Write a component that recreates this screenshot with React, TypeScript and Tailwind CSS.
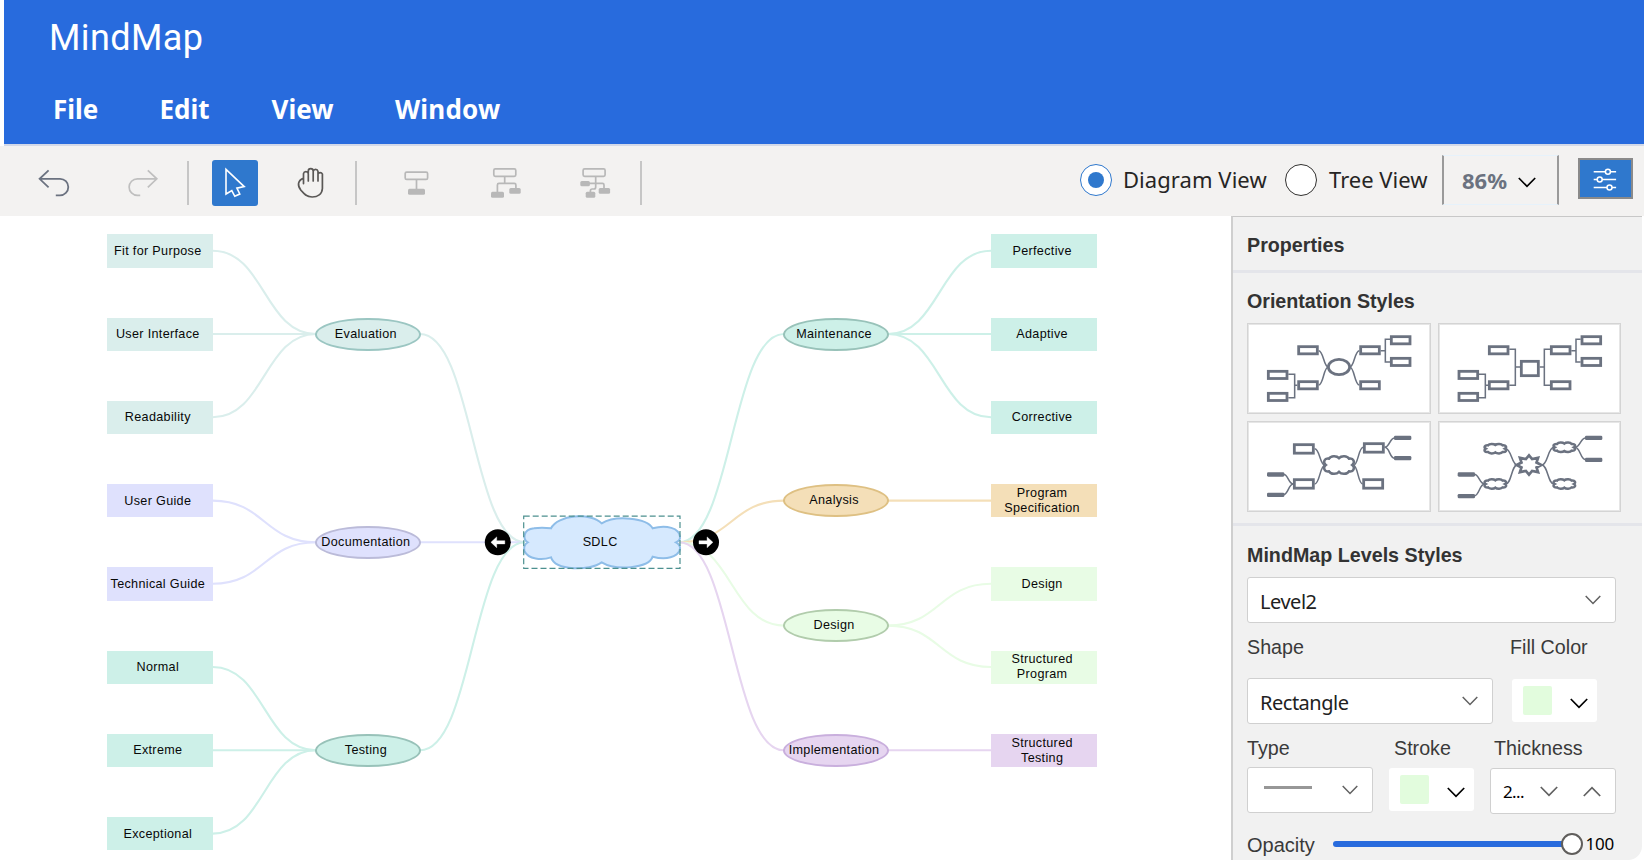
import type { ReactNode } from 'react';

type Tone = { fill: string; stroke: string };

const tones = {
  teal: { fill: '#daeeec', stroke: '#9bc6c2' },
  lilac: { fill: '#dfe1fd', stroke: '#bbbbd9' },
  mint: { fill: '#cdf0e8', stroke: '#98c2b9' },
  sand: { fill: '#f4dfb8', stroke: '#dec083' },
  lime: { fill: '#e8fce5', stroke: '#b1ccac' },
  violet: { fill: '#e6d5f0', stroke: '#c9afdd' },
} satisfies Record<string, Tone>;

type Leaf = { label: string; y: number };
type Branch = { label: string; y: number; side: 'left' | 'right'; tone: Tone; leaves: Leaf[] };

const branches: Branch[] = [
  {
    label: 'Evaluation', y: 334, side: 'left', tone: tones.teal,
    leaves: [{ label: 'Fit for Purpose', y: 250.8 }, { label: 'User Interface', y: 334 }, { label: 'Readability', y: 417.3 }],
  },
  {
    label: 'Documentation', y: 542.3, side: 'left', tone: tones.lilac,
    leaves: [{ label: 'User Guide', y: 500.6 }, { label: 'Technical Guide', y: 583.8 }],
  },
  {
    label: 'Testing', y: 750.3, side: 'left', tone: tones.mint,
    leaves: [{ label: 'Normal', y: 667 }, { label: 'Extreme', y: 750.3 }, { label: 'Exceptional', y: 833.6 }],
  },
  {
    label: 'Maintenance', y: 334, side: 'right', tone: tones.mint,
    leaves: [{ label: 'Perfective', y: 250.8 }, { label: 'Adaptive', y: 334 }, { label: 'Corrective', y: 417.3 }],
  },
  { label: 'Analysis', y: 500.6, side: 'right', tone: tones.sand, leaves: [{ label: 'Program Specification', y: 500.6 }] },
  {
    label: 'Design', y: 625.6, side: 'right', tone: tones.lime,
    leaves: [{ label: 'Design', y: 583.8 }, { label: 'Structured Program', y: 667 }],
  },
  { label: 'Implementation', y: 750.3, side: 'right', tone: tones.violet, leaves: [{ label: 'Structured Testing', y: 750.3 }] },
];

const TOP = 216;
const ROOT_Y = 542.3;
const CLOUD =
  'M173 157C159 149 157 119 192 115C210 112 228 113 243 115C262 75 362 66 395 100C436 75 530 83 548 115C590 103 628 115 630 140C631 149 625 154 618 157C634 166 634 182 620 193C600 207 570 206 548 200C536 236 436 242 395 217C358 244 256 242 243 202C215 212 175 208 163 183C161 172 162 163 173 157Z';

function curve(x1: number, y1: number, x2: number, y2: number) {
  const m = (x1 + x2) / 2;
  return `M${x1} ${y1}C${m} ${y1} ${m} ${y2} ${x2} ${y2}`;
}

function Connectors() {
  return (
    <svg className="absolute inset-0" width="1231" height="644" viewBox="0 216 1231 644" fill="none" strokeWidth="2.1">
      {branches.map((b) => {
        const left = b.side === 'left';
        return (
          <g key={b.label} stroke={b.tone.fill}>
            {b.leaves.map((l) => (
              <path key={l.label} d={left ? curve(212.7, l.y, 316, b.y) : curve(991, l.y, 888, b.y)} />
            ))}
            <path d={left ? curve(420, b.y, 525, ROOT_Y) : curve(784, b.y, 679, ROOT_Y)} />
          </g>
        );
      })}
    </svg>
  );
}

function NodeLabel({ children }: { children: ReactNode }) {
  return (
    <span className="relative -left-[1.9px] top-[0.3px] text-center text-[12.6px] leading-[15px] tracking-[0.33px] text-[#080808]">
      {children}
    </span>
  );
}

function Nodes() {
  return (
    <>
      {branches.map((b) => (
        <div key={b.label}>
          <div
            className="absolute flex h-[33px] w-[105.5px] items-center justify-center rounded-[50%] border-2"
            style={{
              left: b.side === 'left' ? 315 : 783.2,
              top: b.y - 16.4 - TOP,
              backgroundColor: b.tone.fill,
              borderColor: b.tone.stroke,
            }}
          >
            <NodeLabel>{b.label}</NodeLabel>
          </div>
          {b.leaves.map((l) => (
            <div
              key={l.label}
              className="absolute flex h-[33.4px] w-[106px] items-center justify-center px-3"
              style={{ left: b.side === 'left' ? 106.7 : 991, top: l.y - 16.5 - TOP, backgroundColor: b.tone.fill }}
            >
              <span className={l.label.length > 16 ? 'flex justify-center' : 'flex justify-center whitespace-nowrap'}>
                <NodeLabel>{l.label}</NodeLabel>
              </span>
            </div>
          ))}
        </div>
      ))}
    </>
  );
}

function RootNode() {
  return (
    <>
      <svg className="absolute left-[480px] top-[294px]" width="244" height="64" viewBox="480 510 244 64" fill="none">
        <g transform="translate(470 490) scale(.33333)">
          <path d={CLOUD} fill="#d6e9fe" stroke="#8ebde8" strokeWidth="6" />
        </g>
        <rect x="523.7" y="516.2" width="156.3" height="52.2" stroke="#4c908f" strokeWidth="1.2" strokeDasharray="6 3" />
        <circle cx="497.8" cy="542.3" r="13" fill="#000" />
        <circle cx="706" cy="542.3" r="13" fill="#000" />
        <path d="M490.9 542.3L496.7 536.9V540.7H504.8V543.9H496.7V547.7Z" fill="#fff" stroke="#fff" strokeWidth=".4" />
        <path d="M712.9 542.3L707.1 536.9V540.7H699V543.9H707.1V547.7Z" fill="#fff" stroke="#fff" strokeWidth=".4" />
      </svg>
      <div className="absolute left-[524px] top-[300px] flex h-[52px] w-[156px] items-center justify-center">
        <NodeLabel>SDLC</NodeLabel>
      </div>
    </>
  );
}

function Chevron({ className, up = false, w = 16 }: { className: string; up?: boolean; w?: number }) {
  return (
    <svg className={className} width={w} height={w / 2 + 2} viewBox="0 0 18 11" fill="none" stroke="currentColor" strokeWidth="1.7">
      <path d={up ? 'M.8 10L9 1.6L17.2 10' : 'M.8 1L9 9.4L17.2 1'} />
    </svg>
  );
}

function Divider({ className }: { className: string }) {
  return <div className={`mt-[15px] h-[44px] w-[2px] shrink-0 bg-[#c6c6c6] ${className}`} />;
}

function Toolbar() {
  return (
    <div className="flex h-[70px] items-start bg-[#f3f2f1]">
      <svg className="ml-[36px] mt-[20px] shrink-0" width="36" height="34" viewBox="36 166 36 34" fill="none" stroke="#6b7280" strokeWidth="1.8">
        <path d="M48.6 170.3L39.6 178.8L48.6 187.3M39.8 178.8H60A8.3 8.3 0 0 1 60 195.4H55.8" />
      </svg>
      <svg className="ml-[53px] mt-[20px] shrink-0" width="36" height="34" viewBox="125 166 36 34" fill="none" stroke="#bfbfbf" strokeWidth="1.7">
        <path d="M147.8 170.3L156.8 178.8L147.8 187.3M156.6 178.8H137.4A8.3 8.3 0 0 0 137.4 195.4H140.2" />
      </svg>
      <Divider className="ml-[26px]" />
      <div className="ml-[23px] mt-[14px] h-[46px] w-[46px] shrink-0 rounded-[3px] bg-[#2f78cd]">
        <svg width="46" height="46" viewBox="212 160 46 46" fill="none" stroke="#fff" strokeWidth="1.6">
          <path d="M226 169.3L244.2 186.6L236.9 188.1L239.8 194L234.8 196.3L231.8 190.6L226 194Z" />
        </svg>
      </div>
      <svg className="ml-[35px] mt-[18px] mr-px shrink-0" width="34" height="38" viewBox="293.4 164 34 38" fill="none" stroke="#5a5856" strokeWidth="1.7" strokeLinecap="round">
        <path d="M303.9 183.6V173.6a2.45 2.45 0 0 1 4.8 0V181M308.7 172.6V171a2.45 2.45 0 0 1 4.9 0V181M313.6 171.3a2.45 2.45 0 0 1 4.8 0V181M318.4 175v-1a2.45 2.45 0 0 1 4.4 0V188.5C322.4 194.3 318 197 312.6 197C306.6 197 304 193.4 301.3 190.2C297.6 185.8 298 180.6 303.7 178.4" />
      </svg>
      <Divider className="ml-[27px]" />
      <svg className="ml-[43px] mt-[20px] shrink-0" width="36" height="36" viewBox="400 166 36 36" fill="none" stroke="#b8b8b8" strokeWidth="1.7">
        <rect x="405.2" y="172.1" width="22.4" height="7.3" rx="1.5" />
        <path d="M416.5 179.4V189" />
        <rect x="408" y="188.8" width="17" height="6" rx="1.5" fill="#b8b8b8" stroke="none" />
      </svg>
      <svg className="ml-[52px] mt-[20px] shrink-0" width="36" height="36" viewBox="488 166 36 36" fill="none" stroke="#b8b8b8" strokeWidth="1.7">
        <rect x="493.8" y="168.9" width="22" height="7.4" rx="1.5" />
        <path d="M504.7 176.3V183.4M497.4 192V185Q497.4 183.4 499 183.4H514.3Q515.9 183.4 515.9 185V189" />
        <rect x="491" y="191.7" width="13" height="6" rx="1.5" fill="#b8b8b8" stroke="none" />
        <rect x="509.3" y="188" width="11.4" height="5.8" rx="1.5" fill="#b8b8b8" stroke="none" />
      </svg>
      <svg className="ml-[52px] mt-[20px] shrink-0" width="38" height="36" viewBox="576 166 38 36" fill="none" stroke="#b8b8b8" strokeWidth="1.7">
        <rect x="583.1" y="168.9" width="22" height="7.4" rx="1.5" />
        <path d="M595.7 176.3V187Q595.7 189 594 189H592.2Q590.4 189 590.4 191V192M589 183.4H602.4Q604 183.4 604 185V189" />
        <rect x="580.3" y="180.9" width="9.6" height="5.4" rx="1.5" fill="#b8b8b8" stroke="none" />
        <rect x="598.7" y="188" width="11.4" height="5.8" rx="1.5" fill="#b8b8b8" stroke="none" />
        <rect x="585.7" y="191.7" width="9.6" height="6" rx="1.5" fill="#b8b8b8" stroke="none" />
      </svg>
      <Divider className="ml-[26px]" />
      <div className="ml-[438px] flex h-[67px] shrink-0 items-center font-['Noto_Sans',sans-serif] text-[22px] text-[#262524]">
        <span className="flex h-8 w-8 items-center justify-center rounded-full border-[1.5px] border-[#2f78cd] bg-white">
          <span className="h-4 w-4 rounded-full bg-[#2f78cd]" />
        </span>
        <span className="ml-[11px] w-[144px] whitespace-nowrap tracking-[0.06px]">Diagram View</span>
        <span className="ml-[18px] h-8 w-8 rounded-full border-[1.5px] border-[#323130] bg-white" />
        <span className="ml-[12px] w-[100px] whitespace-nowrap">Tree View</span>
      </div>
      <button className="ml-[13px] mt-[9px] flex h-[50px] w-[117px] shrink-0 items-center border-x-2 border-y border-x-[#9a9a9a] border-y-[#e6f2fb] pl-[18px] font-['Noto_Sans',sans-serif] text-[22px] font-bold text-[#6b7280]">
        <span className="w-[45px]">86%</span>
        <Chevron className="ml-[11px] mt-[5px] text-black" w={18} />
      </button>
      <button className="ml-[19px] mt-[12px] flex h-[41px] w-[55px] shrink-0 items-center justify-center border-2 border-[#8a8a8a] bg-[#2f78cd]">
        <svg width="26" height="26" viewBox="1592.3 166.9 26 26" fill="#2f78cd" stroke="#fff" strokeWidth="1.5">
          <path d="M1593 172.6H1615.4M1593 180.5H1615.4M1593 188.4H1615.4" />
          <circle cx="1607.2" cy="172.6" r="2.5" />
          <circle cx="1599" cy="180.5" r="2.5" />
          <circle cx="1608.8" cy="188.4" r="2.5" />
        </svg>
      </button>
    </div>
  );
}

function Boxes({ at, w = 56, h = 21.5 }: { at: [number, number][]; w?: number; h?: number }) {
  return (
    <>
      {at.map(([x, y]) => (
        <rect key={`${x}-${y}`} x={x + 4} y={y + 4} width={w} height={h} />
      ))}
    </>
  );
}

function Bars({ at }: { at: [number, number][] }) {
  return (
    <>
      {at.map(([x, y]) => (
        <rect key={`${x}-${y}`} x={x} y={y} width="52" height="13" rx="4" fill="#6b7280" stroke="none" />
      ))}
    </>
  );
}

function MiniCloud({ cx, cy, w, h }: { cx: number; cy: number; w: number; h: number }) {
  return (
    <path
      d="M5 30C-6 22 0 6 16 9C22 -2 42 -2 50 7C58 -2 78 -2 84 9C100 6 106 22 95 30C106 38 100 54 84 51C78 62 58 62 50 53C42 62 22 62 16 51C0 54 -6 38 5 30Z"
      transform={`translate(${cx - w / 2} ${cy - h / 2}) scale(${w / 100} ${h / 60})`}
      strokeWidth="2.5"
      vectorEffect="non-scaling-stroke"
    />
  );
}

function Thumb({ x, y, children }: { x: number; y: number; children: ReactNode }) {
  return (
    <div className="h-[91px] border border-[#d4d4d4] bg-white outline-1 -outline-offset-2 outline-[#e6e6e6]">
      <svg width="182" height="89" viewBox={`${x} ${y} 546 267`} fill="none" stroke="#6b7280" strokeWidth="8.4">
        {children}
      </svg>
    </div>
  );
}

const starPoints = Array.from({ length: 16 }, (_, i) => {
  const a = (i * Math.PI) / 8;
  const k = i % 2 ? 0.66 : i % 4 === 0 ? 1 : 1.04;
  return `${927 + Math.cos(a) * 37 * k},${765 + Math.sin(a) * 29 * k}`;
}).join(' ');

function OrientationStyles() {
  return (
    <div className="mt-[10px] grid w-[374px] grid-cols-2 gap-[7px]">
      <Thumb x={84} y={342}>
        <g strokeWidth="4.6">
          <path d={curve(296, 422, 325, 471)} />
          <path d={curve(296, 525, 325, 471)} />
          <path d={curve(389, 471, 418, 422)} />
          <path d={curve(389, 471, 418, 525)} />
          <path d="M482 422H496M510 388H496V456H510M232 526H224M205 493H224V563H205" />
        </g>
        <Boxes at={[[510, 376], [510, 441], [418, 406], [418, 511], [232, 406], [232, 511], [141, 480], [141, 546]]} />
        <ellipse cx="357" cy="471" rx="32" ry="23" />
      </Thumb>
      <Thumb x={657} y={342}>
        <path
          strokeWidth="4.6"
          d="M868 418H886V526H868M886 471H900M990 418H973V526H990M973 471H959M1054 422H1068M1082 388H1068V456H1082M804 526H796M777 493H796V563H777"
        />
        <Boxes at={[[1082, 376], [1082, 441], [990, 406], [990, 511], [804, 406], [804, 511], [713, 480], [713, 546]]} />
        <rect x="904" y="454" width="51" height="43" />
      </Thumb>
      <Thumb x={84} y={636}>
        <g strokeWidth="4.6">
          <path d={curve(284, 716, 315, 766)} />
          <path d={curve(284, 822, 315, 766)} />
          <path d={curve(400, 766, 430, 712)} />
          <path d={curve(400, 766, 428, 822)} />
          <path d={curve(494, 712, 524, 684)} />
          <path d={curve(494, 712, 524, 745)} />
          <path d={curve(190, 793, 220, 822)} />
          <path d={curve(190, 854, 220, 822)} />
        </g>
        <Boxes at={[[219, 700], [219, 805], [429, 697], [427, 805]]} w={57} h={25.5} />
        <Bars at={[[522, 677], [522, 738], [141, 787], [141, 848]]} />
        <MiniCloud cx={357} cy={765} w={88} h={54} />
      </Thumb>
      <Thumb x={657} y={636}>
        <g strokeWidth="4.6">
          <path d={curve(857, 716, 892, 765)} />
          <path d={curve(857, 822, 892, 765)} />
          <path d={curve(965, 765, 1002, 712)} />
          <path d={curve(965, 765, 1002, 822)} />
          <path d={curve(1065, 712, 1097, 684)} />
          <path d={curve(1065, 712, 1097, 749)} />
          <path d={curve(762, 793, 794, 822)} />
          <path d={curve(762, 858, 794, 822)} />
        </g>
        <Bars at={[[1095, 677], [1095, 743], [713, 787], [713, 852]]} />
        <MiniCloud cx={826} cy={716} w={64} h={29} />
        <MiniCloud cx={826} cy={822} w={64} h={29} />
        <MiniCloud cx={1033} cy={712} w={64} h={29} />
        <MiniCloud cx={1033} cy={822} w={64} h={29} />
        <polygon points={starPoints} strokeWidth="8" />
      </Thumb>
    </div>
  );
}

function ColorPicker({ className }: { className: string }) {
  return (
    <div className={`flex h-[43px] w-[85px] shrink-0 items-center rounded-[3px] bg-white pl-[11px] ${className}`}>
      <span className="h-[29px] w-[29px] rounded-[2px] bg-[#e2fcdd]" />
      <Chevron className="ml-[18px] mt-[6px] text-black" w={18} />
    </div>
  );
}

const field = 'flex shrink-0 items-center rounded-[3px] border border-[#d0d0d0] bg-white';
const fieldText = "pt-[3px] font-['Noto_Sans',sans-serif] text-[20px] leading-6 tracking-[-0.48px] text-[#212121]";

function PropertiesPanel() {
  return (
    <aside className="h-[644px] w-[411px] shrink-0 overflow-hidden rounded-br-[14px] border-l-2 border-t border-l-[#cfcfcf] border-t-[#c8c8c8] bg-[#f1f1f1] text-[19.7px] leading-6 text-[#3a3a3a]">
      <h2 className="flex h-[56px] items-center border-b-[3px] border-[#e4e5ea] pl-[14px] pt-[3px] font-bold text-[#333]">Properties</h2>
      <section className="border-b-[3px] border-[#e4e5ea] pb-[11px] pl-[14px] pt-[16px]">
        <h3 className="font-bold tracking-[-0.04px] text-[#333]">Orientation Styles</h3>
        <OrientationStyles />
      </section>
      <section className="pl-[14px] pt-[17px]">
        <h3 className="font-bold text-[#333]">MindMap Levels Styles</h3>
        <div className={`${field} mt-[10px] h-[46px] w-[369px] justify-between pl-[12px] pr-[14px]`}>
          <span className={fieldText}>Level2</span>
          <Chevron className="text-[#616161]" />
        </div>
        <div className="mt-[12px] flex">
          <span className="w-[263px]">Shape</span>
          <span>Fill Color</span>
        </div>
        <div className="mt-[19px] flex items-center">
          <div className={`${field} h-[46px] w-[246px] justify-between pl-[12px] pr-[14px]`}>
            <span className={fieldText}>Rectangle</span>
            <Chevron className="text-[#616161]" />
          </div>
          <ColorPicker className="-mt-px ml-[19px]" />
        </div>
        <div className="mt-[12px] flex">
          <span className="w-[147px]">Type</span>
          <span className="w-[100px]">Stroke</span>
          <span>Thickness</span>
        </div>
        <div className="mt-[7px] flex h-[47px] items-start">
          <div className={`${field} h-[46px] w-[126px] justify-between pl-[16px] pr-[14px]`}>
            <span className="mb-[5px] h-[3px] w-[48px] bg-[#979797]" />
            <Chevron className="text-[#616161]" />
          </div>
          <ColorPicker className="ml-[16px] mt-px" />
          <div className={`${field} ml-[16px] mt-px h-[46px] w-[126px] pl-[12px]`}>
            <span className="w-[37px] pt-[2px] font-['Noto_Sans',sans-serif] text-[17px] tracking-[-0.6px] text-black">2...</span>
            <Chevron className="text-[#616161]" w={18} />
            <Chevron className="ml-[25px] text-[#616161]" up w={18} />
          </div>
        </div>
        <div className="mt-[17px] flex h-[27px] items-center">
          <span className="w-[86px] text-[20px]">Opacity</span>
          <div className="relative mb-[2px] h-[6px] w-[239px] rounded-full bg-[#286bdd]">
            <span className="absolute -right-[11px] -top-[8px] h-[22px] w-[22px] rounded-full border-[2.5px] border-[#605e5c] bg-white" />
          </div>
          <span className="mb-[2px] ml-[13.5px] font-['Noto_Sans',sans-serif] text-[17px] tracking-[-0.2px] text-black">100</span>
        </div>
      </section>
    </aside>
  );
}

export default function App() {
  return (
    <div className="h-[860px] w-[1644px] overflow-hidden bg-white font-['Liberation_Sans',Arial,sans-serif]">
      <header className="ml-1 h-[146px] border-b-2 border-[#d3d9e8] bg-[#286bdd] text-white">
        <h1 className="flex h-[74px] items-center pl-[45px] pt-px font-['Roboto',sans-serif] text-[36px] tracking-[0.4px]">MindMap</h1>
        <nav className="flex h-[70px] items-center pl-[49px] pt-px font-['Noto_Sans',sans-serif] text-[26px] font-bold">
          <span className="w-[106.5px]">File</span>
          <span className="w-[112px]">Edit</span>
          <span className="w-[123.5px]">View</span>
          <span className="tracking-[0.2px]">Window</span>
        </nav>
      </header>
      <Toolbar />
      <div className="flex">
        <main className="relative h-[644px] w-[1231px] shrink-0">
          <Connectors />
          <Nodes />
          <RootNode />
        </main>
        <PropertiesPanel />
      </div>
    </div>
  );
}
